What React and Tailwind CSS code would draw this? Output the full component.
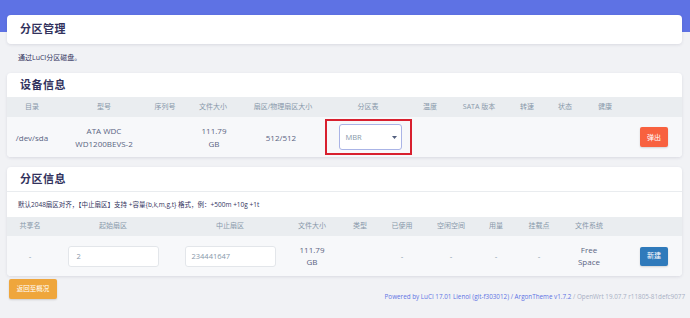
export default function App() {
  const h2 = ["目录", "型号", "序列号", "文件大小", "扇区/物理扇区大小", "分区表", "温度", "SATA 版本", "转速", "状态", "健康", ""];
  const h3 = ["共享名", "起始扇区", "中止扇区", "文件大小", "类型", "已使用", "空闲空间", "用量", "挂载点", "文件系统", ""];
  return (
    <div className="w-[690px] min-h-[318px] overflow-hidden bg-[linear-gradient(to_bottom,#5e72e4_0px,#5e72e4_32px,#f1f2f5_32px)] pl-[7px] pr-[8px] pt-[15px] font-['Open_Sans','Noto_Sans_CJK_SC',sans-serif] text-[#5a6482]">
      {/* Card 1 */}
      <div className="h-[29px] rounded-[4px] bg-white shadow-[0_1px_3px_rgba(50,50,93,0.12)] flex items-center px-[13px]">
        <span className="text-[11px] font-bold text-[#32325d] tracking-[0.5px]">分区管理</span>
      </div>
      <div className="h-[29px] flex items-center pl-[11px] text-[7px] text-[#32325d]">通过LuCI分区磁盘。</div>

      {/* Card 2 */}
      <div className="rounded-[4px] bg-white shadow-[0_1px_3px_rgba(50,50,93,0.12)] overflow-hidden">
        <div className="h-[24px] flex items-center px-[13px]">
          <span className="text-[11px] font-bold text-[#32325d] tracking-[0.5px]">设备信息</span>
        </div>
        <div className="h-[20px] bg-[#eaedf0] grid grid-cols-[50px_94px_28px_68px_72px_98px_26px_72px_24px_52px_28px_1fr] items-center text-center text-[7px] text-[#8898aa] whitespace-nowrap">
          {h2.map((h, i) => (
            <div key={i}>{h}</div>
          ))}
        </div>
        <div className="h-[40px] bg-[#f7f8fa] grid grid-cols-[50px_94px_28px_68px_72px_98px_26px_72px_24px_52px_28px_1fr] items-center text-center text-[8px] leading-[13px]">
          <div>/dev/sda</div>
          <div>ATA WDC<br />WD1200BEVS-2</div>
          <div></div>
          <div className="pl-[2px]">111.79<br />GB</div>
          <div className="pr-[4px]">512/512</div>
          <div className="flex justify-center">
            <div className="w-[87px] h-[36px] border-2 border-[#d8202e] flex items-center justify-center">
              <div className="ml-[4px] w-[63px] h-[26px] rounded-[3px] border border-[#aab4e6] bg-white flex items-center justify-between pl-[6px] pr-[4px] text-[7.5px] text-[#8898aa]">
                <span>MBR</span>
                <svg width="5" height="3" viewBox="0 0 5 3"><path d="M0 0h5L2.5 3z" fill="#525f7f" /></svg>
              </div>
            </div>
          </div>
          <div></div>
          <div></div>
          <div></div>
          <div></div>
          <div></div>
          <div className="flex justify-end pr-[14px]">
            <div className="w-[28px] h-[20px] rounded-[2px] bg-[#f8613f] text-white text-[7px] flex items-center justify-center shadow-[0_1px_2px_rgba(0,0,0,0.15)]">弹出</div>
          </div>
        </div>
      </div>

      {/* Card 3 */}
      <div className="mt-[10px] rounded-[4px] bg-white shadow-[0_1px_3px_rgba(50,50,93,0.12)] overflow-hidden">
        <div className="h-[25px] flex items-center px-[13px] border-b border-[#e9ecef]">
          <span className="text-[11px] font-bold text-[#32325d] tracking-[0.5px]">分区信息</span>
        </div>
        <div className="h-[25px] flex items-center pl-[11px] text-[6.5px] text-[#32325d] whitespace-nowrap">默认2048扇区对齐，【中止扇区】支持 +容量{"{b,k,m,g,t}"} 格式，例：+500m +10g +1t</div>
        <div className="h-[19px] bg-[#eaedf0] grid grid-cols-[46px_120px_114px_50px_46px_38px_60px_30px_56px_44px_1fr] items-center text-center text-[7px] text-[#8898aa] whitespace-nowrap">
          {h3.map((h, i) => (
            <div key={i}>{h}</div>
          ))}
        </div>
        <div className="h-[40px] bg-[#f7f8fa] grid grid-cols-[46px_120px_114px_50px_46px_38px_60px_30px_56px_44px_1fr] items-center text-center text-[8px] leading-[12px]">
          <div className="text-[#8898aa]">-</div>
          <div className="flex justify-center">
            <div className="w-[91px] h-[21px] rounded-[3px] border border-[#e3e6ea] bg-white flex items-center pl-[8px] text-[7.5px] text-[#8898aa]">2</div>
          </div>
          <div className="flex justify-center">
            <div className="w-[91px] h-[21px] rounded-[3px] border border-[#e3e6ea] bg-white flex items-center pl-[6px] text-[7.5px] text-[#8898aa]">234441647</div>
          </div>
          <div>111.79<br />GB</div>
          <div></div>
          <div className="text-[#8898aa]">-</div>
          <div className="text-[#8898aa]">-</div>
          <div className="text-[#8898aa]">-</div>
          <div className="text-[#8898aa]">-</div>
          <div>Free<br />Space</div>
          <div className="flex justify-end pr-[14px]">
            <div className="w-[28px] h-[19px] rounded-[2px] bg-[#2f7abb] text-white text-[7px] flex items-center justify-center shadow-[0_1px_2px_rgba(0,0,0,0.15)]">新建</div>
          </div>
        </div>
      </div>

      {/* Footer */}
      <div className="flex justify-between items-start mt-[3px]">
        <div className="ml-[2px] w-[48px] h-[20px] rounded-[2px] bg-[#efa63c] text-white text-[6.5px] flex items-center justify-center shadow-[0_1px_2px_rgba(0,0,0,0.15)]">返回至概况</div>
        <div className="mt-[13px] text-[6.3px] whitespace-nowrap mr-[-3px]">
          <span className="text-[#5e72e4]">Powered by LuCI 17.01 Lienol (git-f303012) / ArgonTheme v1.7.2</span>
          <span className="text-[#a8b0c4]"> / OpenWrt 19.07.7 r11805-81defc9077</span>
        </div>
      </div>
    </div>
  );
}
